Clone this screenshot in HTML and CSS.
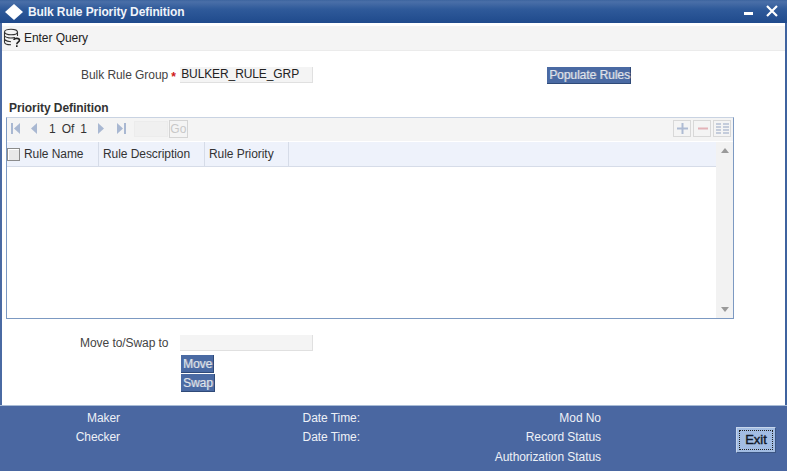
FILE: index.html
```html
<!DOCTYPE html>
<html lang="en">
<head>
<meta charset="utf-8">
<title>Bulk Rule Priority Definition</title>
<link rel="stylesheet" href="styles.css">
</head>
<body>
<div class="window">
  <header class="titlebar">
    <svg class="logo" width="18" height="16" viewBox="0 0 18 16"><path d="M9 0 L18 8 L9 16 L0 8 Z" fill="#fff"/></svg>
    <span class="title">Bulk Rule Priority Definition</span>
    <svg class="winbtn min" width="10" height="4" viewBox="0 0 10 4"><rect width="9" height="3" y="0" fill="#fff"/></svg>
    <svg class="winbtn close" width="12" height="12" viewBox="0 0 12 12"><path d="M1 1 L11 11 M11 1 L1 11" stroke="#fff" stroke-width="2.2" fill="none"/></svg>
  </header>
  <div class="toolbar">
    <svg width="20" height="20" viewBox="0 0 20 20" fill="none" stroke="#333" stroke-width="1.1">
      <ellipse cx="8" cy="4" rx="6.5" ry="2.8"/>
      <path d="M1.5 4 V14 C1.5 15.8 5 16.8 8 16.8 M14.5 4 V8 M1.5 8 C3 10 8 10.5 12 9.5 M1.5 11.5 C3 13 6 13.8 8 13.8"/>
      <path d="M11 12 C11 9.8 16.5 9.8 16.5 12.3 C16.5 14.2 13.8 14.2 13.8 16.2 M13.8 17.3 V19" stroke-width="1.6" stroke="#222"/>
    </svg>
    <span>Enter Query</span>
  </div>
  <main class="content">
    <div class="group-row">
      <label class="group-label">Bulk Rule Group</label>
      <span class="req">*</span>
      <input class="field group-field" value="BULKER_RULE_GRP">
      <button class="btn populate">Populate Rules</button>
    </div>
    <h2 class="section">Priority Definition</h2>
    <section class="grid-box">
      <div class="pager">
        <svg class="pg" width="10" height="11" viewBox="0 0 10 11"><rect x="0" y="0" width="2" height="11" fill="#a9b8d2"/><path d="M9 0 V11 L3 5.5 Z" fill="#a9b8d2"/></svg>
        <svg class="pg second" width="7" height="11" viewBox="0 0 7 11"><path d="M7 0 V11 L1 5.5 Z" fill="#a9b8d2"/></svg>
        <span class="pg-text first">1</span><span class="pg-text">Of</span><span class="pg-text">1</span>
        <svg class="pg third" width="7" height="11" viewBox="0 0 7 11"><path d="M0 0 V11 L6 5.5 Z" fill="#a9b8d2"/></svg>
        <svg class="pg fourth" width="10" height="11" viewBox="0 0 10 11"><path d="M0 0 V11 L6 5.5 Z" fill="#a9b8d2"/><rect x="7" width="2" height="11" fill="#a9b8d2"/></svg>
        <input class="pg-input">
        <span class="go">Go</span>
        <div class="pg-actions">
          <span class="act"><svg width="13" height="13" viewBox="0 0 13 13"><path d="M6.5 1 V12 M1 6.5 H12" stroke="#aebbd3" stroke-width="2"/></svg></span>
          <span class="act"><svg width="13" height="13" viewBox="0 0 13 13"><path d="M2 6.5 H12" stroke="#e3b3b8" stroke-width="2"/></svg></span>
          <span class="act"><svg width="15" height="13" viewBox="0 0 15 13"><path d="M1 2 H6 M8 2 H14 M1 5 H6 M8 5 H14 M1 8 H6 M8 8 H14 M1 11 H6 M8 11 H14" stroke="#b4bfd2" stroke-width="1.4"/></svg></span>
        </div>
      </div>
      <div class="table-wrap">
        <div class="table">
          <div class="thead">
            <div class="th th-check"><span class="check"></span></div>
            <div class="th th-name">Rule Name</div>
            <div class="th th-desc">Rule Description</div>
            <div class="th th-prio">Rule Priority</div>
          </div>
        </div>
        <div class="scrollbar">
          <svg width="8" height="5" viewBox="0 0 8 5"><path d="M4 0 L8 5 H0 Z" fill="#9a9a9a"/></svg>
          <svg width="8" height="5" viewBox="0 0 8 5"><path d="M4 5 L8 0 H0 Z" fill="#9a9a9a"/></svg>
        </div>
      </div>
    </section>
    <div class="move-row">
      <label class="move-label">Move to/Swap to</label>
      <input class="field move-field">
    </div>
    <div class="move-btns">
      <button class="btn small">Move</button>
      <button class="btn small">Swap</button>
    </div>
  </main>
  <footer class="footer">
    <div class="audit col1"><span>Maker</span><span>Checker</span></div>
    <div class="audit col2"><span>Date Time:</span><span>Date Time:</span></div>
    <div class="audit col3"><span>Mod No</span><span>Record Status</span><span class="last">Authorization Status</span></div>
    <button class="exit"><span class="exit-inner">Exit</span></button>
  </footer>
</div>
</body>
</html>
```
FILE: styles.css
```css
* { box-sizing: border-box; }
html, body { margin: 0; padding: 0; }
body {
  width: 787px;
  height: 471px;
  overflow: hidden;
  background: #fff;
  font-family: "Liberation Sans", Arial, sans-serif;
  font-size: 12px;
  letter-spacing: -0.06px;
  color: #333;
}
.window {
  width: 787px;
  height: 471px;
  display: flex;
  flex-direction: column;
  border-left: 2px solid #4a6aa3;
  border-right: 2px solid #3f639f;
  background: #fff;
}
.titlebar {
  height: 23px;
  margin: 0 -2px 3px -2px;
  padding-left: 5px;
  display: flex;
  align-items: center;
  background: linear-gradient(#3d659f 0, #4a6fa8 8%, #2f5a9a 40%, #1f4a8c 100%);
  color: #fff;
  flex: none;
}
.logo { flex: none; }
.title {
  margin-left: 5px;
  font-size: 12px;
  font-weight: bold;
  letter-spacing: -0.1px;
  color: #f0f4fa;
  flex: 1;
}
.winbtn { flex: none; }
.min { margin-right: 12px; margin-top: 5px; }
.close { margin-right: 9px; margin-top: -2px; }
.toolbar {
  height: 25px;
  flex: none;
  display: flex;
  align-items: center;
  gap: 1px;
  padding-left: 1px;
  background: #f4f4f4;
  border-bottom: 1px solid #ebebeb;
  color: #222;
}
.content {
  flex: 1;
  display: flex;
  flex-direction: column;
  min-height: 0;
}
.group-row {
  display: flex;
  align-items: center;
  height: 16px;
  margin-top: 16px;
}
.group-label { margin-left: 79px; color: #444; }
.req { color: #d01818; margin-left: 3px; width: 9px; font-weight: bold; line-height: 12px; padding-top: 3px; }
.field {
  font: 12px "Liberation Sans", Arial, sans-serif;
  letter-spacing: -0.1px;
  color: #222;
  background: #f4f4f4;
  border: 0;
  border-right: 1px solid #e0e0e0;
  border-bottom: 1px solid #e0e0e0;
  height: 16px;
  width: 133px;
  padding: 0 1px 1px;
  margin: 0;
  outline: none;
}
.btn {
  font: 12px "Liberation Sans", Arial, sans-serif;
  letter-spacing: -0.05px;
  color: #e0e4ec;
  background: #4a6aa3;
  border: 0;
  border-right: 1px solid #2f4a78;
  border-bottom: 1px solid #2f4a78;
  padding: 0 0 0 2px;
  margin: 0;
  text-align: left;
  white-space: nowrap;
  text-shadow: 1px 0 0 #8d9cb8;
}
.populate { margin-left: 234px; width: 84px; height: 17px; }
.section {
  margin: 18px 0 0 7px;
  font-size: 12px;
  font-weight: bold;
  line-height: 14px;
  color: #333;
}
.grid-box {
  margin: 2px 0 0 4px;
  width: 728px;
  height: 202px;
  border: 1px solid #c9d3e2;
  border-bottom: 1px solid #7c99c2;
  border-left-color: #7c99c2;
  border-right-color: #7c99c2;
  display: flex;
  flex-direction: column;
}
.pager {
  height: 24px;
  flex: none;
  background: #f4f4f4;
  border-bottom: 1px solid #fff;
  display: flex;
  align-items: center;
  padding: 0 0 2px 4px;
  color: #333;
}
.pg { flex: none; }
.pg.second { margin-left: 9px; }
.pg.third { margin-left: 11px; }
.pg.fourth { margin-left: 12px; }
.pg-text { margin-left: 6px; }
.pg-text.first { margin-left: 12px; }
.pg-input {
  width: 34px;
  height: 16px;
  margin: 0 0 0 7px;
  border: 1px solid #ececec;
  background: #f0f0f0;
  padding: 0;
}
.go {
  width: 19px;
  height: 18px;
  margin-left: 1px;
  border: 1px solid #d4d4d4;
  color: #c8c8c8;
  text-align: center;
  line-height: 16px;
}
.pg-actions {
  margin-left: auto;
  margin-right: 2px;
  margin-bottom: 1px;
  display: flex;
  gap: 2px;
}
.act {
  width: 18px;
  height: 17px;
  border: 1px solid #d8d8d8;
  display: flex;
  align-items: center;
  justify-content: center;
}
.table-wrap { flex: 1; display: flex; min-height: 0; }
.table { flex: 1; min-width: 0; }
.thead {
  height: 25px;
  background: #eef2fb;
  border-bottom: 1px solid #d6dce8;
  display: flex;
  color: #333;
}
.th {
  line-height: 24px;
  padding-left: 4px;
  border-right: 1px solid #d6dce8;
}
.th-check { width: 14px; padding: 0; border: 0; display: flex; align-items: center; }
.check {
  width: 13px;
  height: 13px;
  background: #e8e8e8;
  border: 1px solid #8c8c8c;
  box-shadow: inset 1px 1px 0 #fff;
}
.th-name { width: 78px; padding-left: 3px; }
.th-desc { width: 106px; }
.th-prio { width: 84px; }
.scrollbar {
  width: 17px;
  flex: none;
  background: #f2f2f2;
  display: flex;
  flex-direction: column;
  align-items: center;
  justify-content: space-between;
  padding: 6px 0 6px;
}
.move-row {
  display: flex;
  align-items: center;
  height: 16px;
  margin-top: 16px;
}
.move-label { margin-left: 78px; width: 100px; color: #444; }
.move-btns {
  margin: 4px 0 0 179px;
  display: flex;
  flex-direction: column;
  align-items: flex-start;
  gap: 1px;
}
.btn.small { height: 18px; width: 33px; }
.btn.small + .btn.small { width: 34px; }
.footer {
  height: 66px;
  flex: none;
  margin: 0 -2px 0 -2px;
  background: #4a67a1;
  border-top: 1px solid #a9bcd6;
  position: relative;
  display: flex;
  color: #fff;
  padding-top: 3px;
}
.audit {
  display: flex;
  flex-direction: column;
  align-items: flex-end;
  color: #eef1f7;
  line-height: 19px;
}
.audit .last { margin-top: 1px; }
.col1 { width: 120px; }
.col2 { width: 240px; }
.col3 { width: 241px; }
.exit {
  position: absolute;
  left: 736px;
  top: 21px;
  width: 40px;
  height: 26px;
  padding: 2px;
  background: #a3bde3;
  border: 1px solid #3c5684;
  border-top-color: #c7d6ec;
  border-left-color: #c7d6ec;
  font: 13px "Liberation Sans", Arial, sans-serif;
  -webkit-text-stroke: 0.4px #101828;
  color: #101828;
}
.exit-inner {
  display: block;
  height: 100%;
  line-height: 18px;
  border: 1px dotted #222;
}
```
